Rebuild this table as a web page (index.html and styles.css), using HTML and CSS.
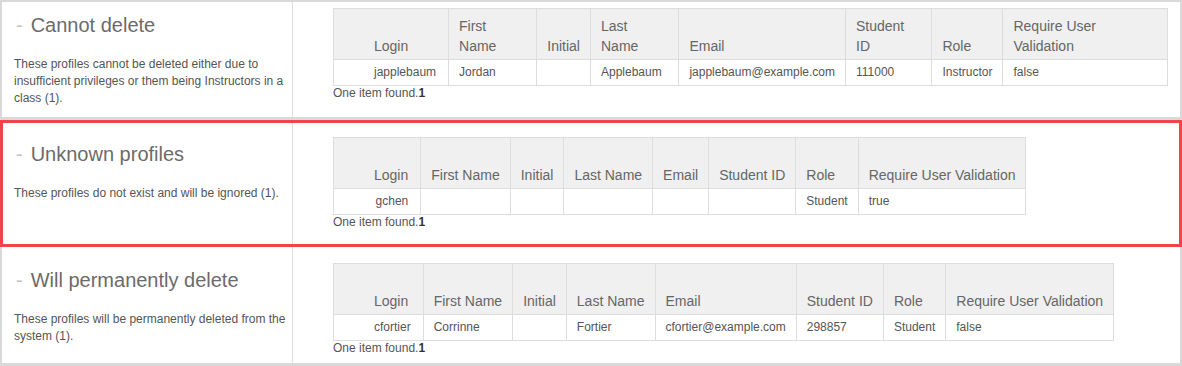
FILE: index.html
```html
<!DOCTYPE html>
<html lang="en">
<head>
<meta charset="utf-8">
<title>Delete profiles</title>
<link rel="stylesheet" href="styles.css">
</head>
<body>
<div class="panel">
  <section class="group group--first">
    <div class="group-info">
      <h2 class="group-title"><span class="dash">-</span>Cannot delete</h2>
      <p class="group-desc">These profiles cannot be deleted either due to insufficient privileges or them being Instructors in a class (1).</p>
    </div>
    <div class="group-body">
      <table class="grid">
        <thead>
          <tr>
            <th class="login">Login</th>
            <th>First Name</th>
            <th>Initial</th>
            <th>Last Name</th>
            <th>Email</th>
            <th>Student ID</th>
            <th>Role</th>
            <th>Require User Validation</th>
          </tr>
        </thead>
        <tbody>
          <tr>
            <td class="login">japplebaum</td>
            <td>Jordan</td>
            <td></td>
            <td>Applebaum</td>
            <td>japplebaum@example.com</td>
            <td>111000</td>
            <td>Instructor</td>
            <td>false</td>
          </tr>
        </tbody>
      </table>
      <div class="found">One item found.<b>1</b></div>
    </div>
  </section>

  <section class="group group--flagged">
    <div class="group-info">
      <h2 class="group-title"><span class="dash">-</span>Unknown profiles</h2>
      <p class="group-desc">These profiles do not exist and will be ignored (1).</p>
    </div>
    <div class="group-body">
      <table class="grid">
        <thead>
          <tr>
            <th class="login">Login</th>
            <th>First Name</th>
            <th>Initial</th>
            <th>Last Name</th>
            <th>Email</th>
            <th>Student ID</th>
            <th>Role</th>
            <th>Require User Validation</th>
          </tr>
        </thead>
        <tbody>
          <tr>
            <td class="login">gchen</td>
            <td></td>
            <td></td>
            <td></td>
            <td></td>
            <td></td>
            <td>Student</td>
            <td>true</td>
          </tr>
        </tbody>
      </table>
      <div class="found">One item found.<b>1</b></div>
    </div>
  </section>

  <section class="group group--last">
    <div class="group-info">
      <h2 class="group-title"><span class="dash">-</span>Will permanently delete</h2>
      <p class="group-desc">These profiles will be permanently deleted from the system (1).</p>
    </div>
    <div class="group-body">
      <table class="grid">
        <thead>
          <tr>
            <th class="login">Login</th>
            <th>First Name</th>
            <th>Initial</th>
            <th>Last Name</th>
            <th>Email</th>
            <th>Student ID</th>
            <th>Role</th>
            <th>Require User Validation</th>
          </tr>
        </thead>
        <tbody>
          <tr>
            <td class="login">cfortier</td>
            <td>Corrinne</td>
            <td></td>
            <td>Fortier</td>
            <td>cfortier@example.com</td>
            <td>298857</td>
            <td>Student</td>
            <td>false</td>
          </tr>
        </tbody>
      </table>
      <div class="found">One item found.<b>1</b></div>
    </div>
  </section>
</div>
</body>
</html>
```

FILE: styles.css
```css
html, body {
  margin: 0;
  padding: 0;
  background: #ffffff;
}

body {
  font-family: "Liberation Sans", Arial, sans-serif;
  color: #555555;
}

.panel {
  border: 2px solid #d9d9d9;
  border-bottom-width: 3px;
  height: 361px;
  overflow: visible;
}

.group {
  display: flex;
  position: relative;
  border-bottom: 3px solid #d9d9d9;
}

.group--first { height: 115px; }
.group--flagged { height: 124px; }
.group--last { height: 116px; border-bottom: 0; }

.group--flagged::after {
  content: "";
  position: absolute;
  top: 0;
  left: -2px;
  right: -2px;
  bottom: -3px;
  border: 3px solid #f04448;
  pointer-events: none;
}

.group-info {
  width: 275px;
  flex: none;
  padding: 0 3px 0 12px;
  border-right: 1px solid #dddddd;
}

.group-body {
  flex: 1;
  min-width: 0;
  padding: 0 12px 0 40px;
}

.group--first .group-info,
.group--first .group-body { padding-top: 6px; }
.group--flagged .group-info,
.group--flagged .group-body { padding-top: 17px; }
.group--last .group-info,
.group--last .group-body { padding-top: 16px; }

.group-title {
  margin: 6px 0 0;
  padding-left: 2px;
  font-size: 20px;
  line-height: 23px;
  font-weight: normal;
  color: #6b6b6b;
}

.dash {
  color: #c4c4c4;
  margin-right: 8px;
}

.group-desc {
  margin: 19px 0 0;
  font-size: 12px;
  line-height: 17px;
  color: #555555;
}

.grid {
  border-collapse: collapse;
  font-size: 12px;
}

.grid th {
  height: 40px;
  padding: 7px 10px 3px;
  background: #f0f0f0;
  border: 1px solid #dddddd;
  font-size: 14px;
  line-height: 20px;
  font-weight: normal;
  color: #666666;
  text-align: left;
  vertical-align: bottom;
}

.grid td {
  padding: 5px 10px 6px;
  border: 1px solid #dddddd;
  line-height: 14px;
  color: #555555;
  text-align: left;
  white-space: nowrap;
}

.grid .login {
  padding-left: 40px;
  padding-right: 12px;
}

.grid td.login {
  text-align: right;
}

.found {
  font-size: 12px;
  line-height: 14px;
  color: #555555;
}

.found b {
  color: #333333;
}
```
